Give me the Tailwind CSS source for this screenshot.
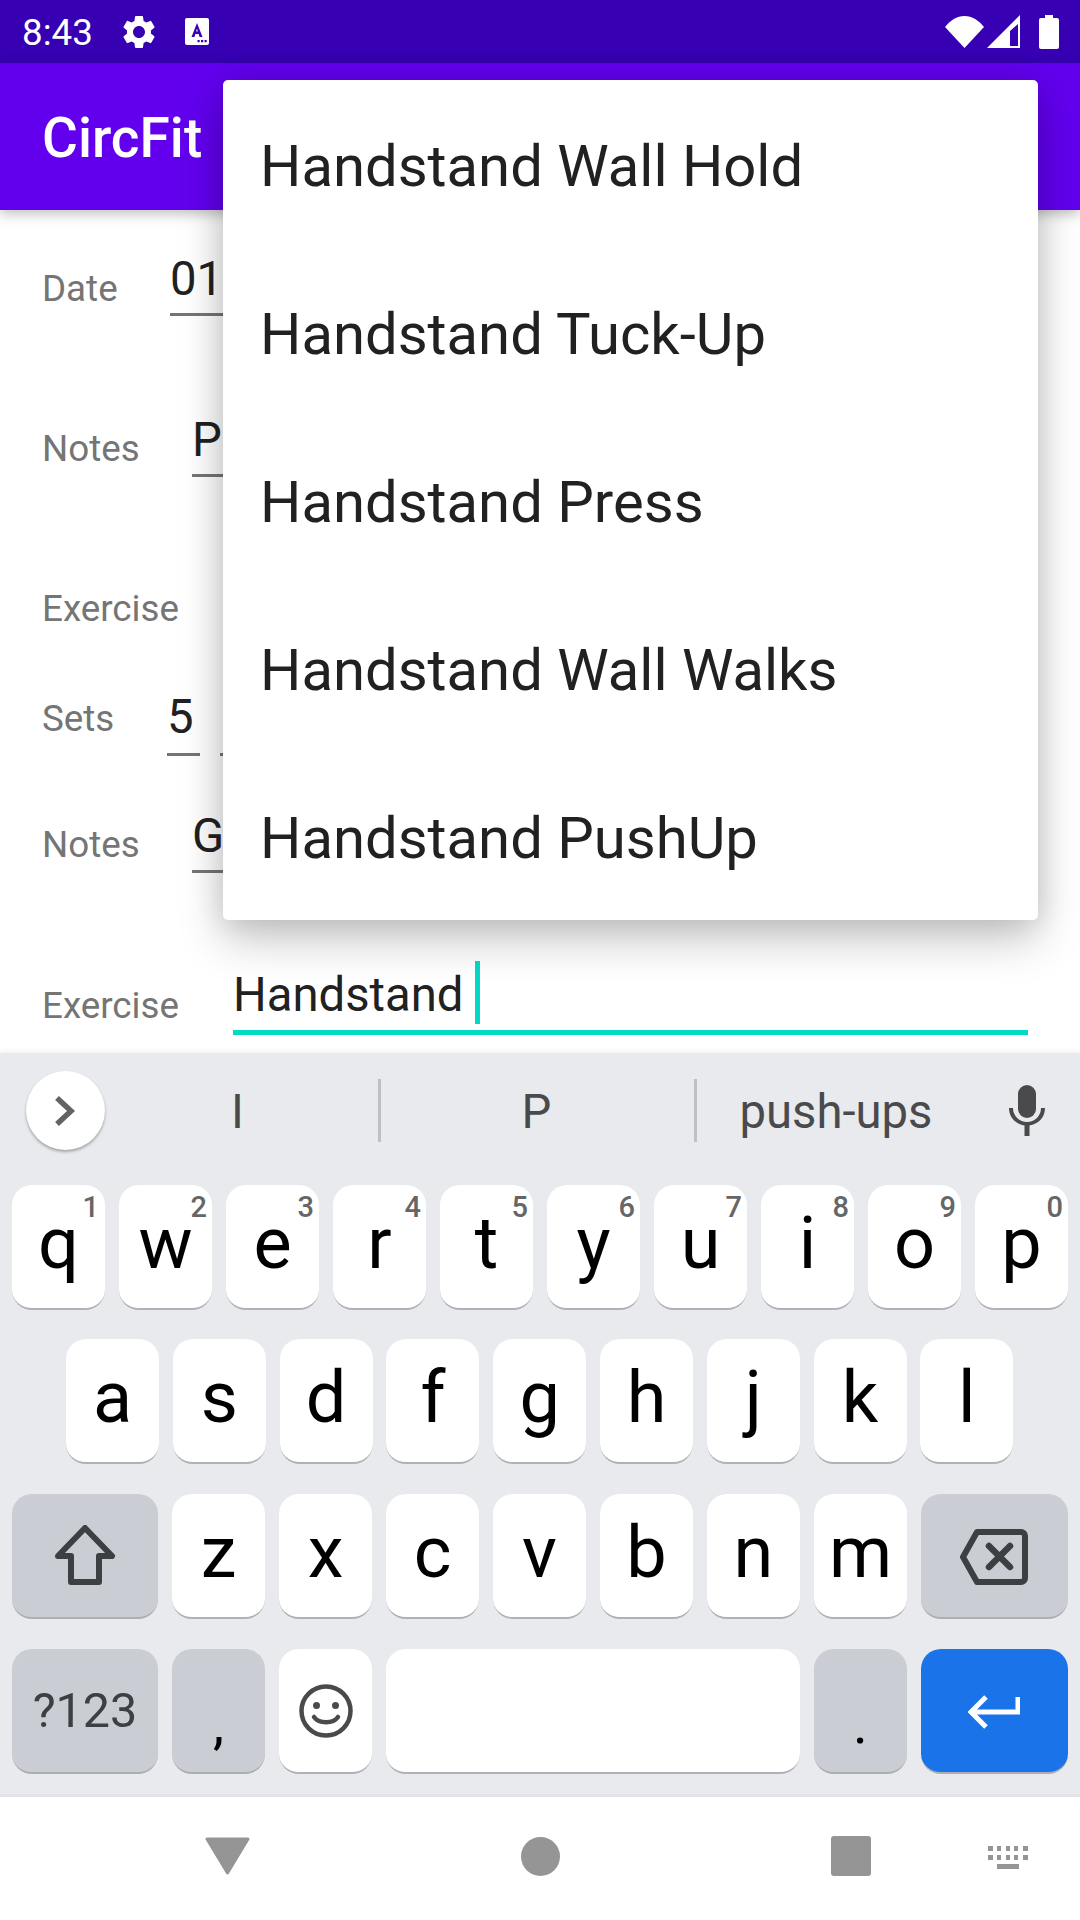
<!DOCTYPE html>
<html><head><meta charset="utf-8">
<script src="https://cdn.jsdelivr.net/npm/@tailwindcss/browser@4"></script>
</head>
<body class="m-0">
<div class="w-[1080px] h-[1920px] bg-white flex flex-col overflow-hidden relative font-['Roboto',sans-serif]">

  <!-- status bar -->
  <div class="h-[63px] bg-[#3700b3] flex items-center text-white shrink-0">
    <span class="ml-[22px] pt-[3px] text-[36.75px] leading-none">8:43</span>
    <svg class="ml-[26px] w-[40px] h-[40px]" viewBox="0 0 24 24" fill="#fff"><path d="M19.14 12.94c.04-.3.06-.61.06-.94 0-.32-.02-.64-.07-.94l2.03-1.58a.49.49 0 0 0 .12-.61l-1.92-3.32a.49.49 0 0 0-.59-.22l-2.39.96c-.5-.38-1.03-.7-1.62-.94l-.36-2.54a.48.48 0 0 0-.48-.41h-3.84c-.24 0-.43.17-.47.41l-.36 2.54c-.59.24-1.13.57-1.62.94l-2.39-.96c-.22-.08-.47 0-.59.22L2.74 8.87c-.12.21-.08.47.12.61l2.03 1.58c-.05.3-.09.63-.09.94s.02.64.07.94l-2.03 1.58a.49.49 0 0 0-.12.61l1.92 3.32c.12.22.37.29.59.22l2.39-.96c.5.38 1.03.7 1.62.94l.36 2.54c.05.24.24.41.48.41h3.84c.24 0 .44-.17.47-.41l.36-2.54c.59-.24 1.13-.56 1.62-.94l2.39.96c.22.08.47 0 .59-.22l1.92-3.32c.12-.22.07-.47-.12-.61l-2.01-1.58zM12 15.6c-1.98 0-3.6-1.62-3.6-3.6s1.62-3.6 3.6-3.6 3.6 1.62 3.6 3.6-1.62 3.6-3.6 3.6z"/></svg>
    <svg class="ml-[26px] w-[24px] h-[27px]" viewBox="0 0 24 27"><rect width="24" height="27" rx="2" fill="#fff"/><path d="M12 5 L6.5 19 H9.4 L10.4 16 H13.6 L14.6 19 H17.5 Z M11.2 13.5 L12 10.5 L12.8 13.5 Z" fill="#3700b3"/><rect x="12.5" y="22" width="2.2" height="2.2" fill="#3700b3"/><rect x="16" y="22" width="2.2" height="2.2" fill="#3700b3"/><rect x="19.5" y="22" width="2.2" height="2.2" fill="#3700b3"/></svg>
    <svg class="ml-auto w-[39px] h-[32px]" viewBox="0 0 39 32" fill="#fff"><path d="M0 11 C5 4.500 12 0 19.500 0 C27 0 34 4.500 39 11 L19.500 32 Z"/></svg>
    <svg class="ml-[3px] w-[33px] h-[33px]" viewBox="0 0 33 33"><path fill-rule="evenodd" fill="#fff" d="M33 0 V33 H0 Z M31 9 L23 16 V31 H31 Z"/><path d="M25 17 L29.500 12 V29.500 H25 Z" fill="#3700b3"/></svg>
    <svg class="ml-[19px] mr-[21px] w-[20px] h-[34px]" viewBox="0 0 20 34" fill="#fff"><path d="M6 0 H14 V3 H18 A2 2 0 0 1 20 5 V32 A2 2 0 0 1 18 34 H2 A2 2 0 0 1 0 32 V5 A2 2 0 0 1 2 3 H6 Z"/></svg>
  </div>

  <!-- app bar -->
  <div class="relative z-10 h-[147px] bg-[#6200ee] flex items-center pl-[42px] pt-[4px] shadow-[0_4px_12px_rgba(0,0,0,0.25)] shrink-0">
    <span class="text-white text-[55px] font-medium leading-none">CircFit</span>
  </div>

  <!-- form -->
  <div class="h-[843px] shrink-0 overflow-hidden pl-[42px] text-[36.75px] text-[#757575]">
    <div class="mt-[44px] h-[62px] flex items-end">
      <span class="w-[128px] mb-[2px] leading-[50px]">Date</span>
      <div class="w-[300px] h-[62px] border-b-[3px] border-[#757575] text-[47.25px] leading-[50px] text-[#212121]">01</div>
    </div>
    <div class="mt-[99px] h-[62px] flex items-end">
      <span class="w-[150px] mb-[3px] leading-[50px]">Notes</span>
      <div class="w-[300px] h-[62px] border-b-[3px] border-[#757575] text-[47.25px] leading-[50px] text-[#212121]">P</div>
    </div>
    <div class="mt-[107px] h-[50px] leading-[50px]">Exercise</div>
    <div class="mt-[60px] h-[62px] flex items-end">
      <span class="w-[125px] mb-[12px] leading-[50px]">Sets</span>
      <div class="w-[33px] h-[64px] border-b-[3px] border-[#757575] text-[47.25px] leading-[50px] text-[#212121]">5</div>
      <div class="ml-[20px] w-[60px] h-[64px] border-b-[3px] border-[#757575] text-[47.25px] leading-[50px] text-[#212121]">1</div>
    </div>
    <div class="mt-[55px] h-[62px] flex items-end">
      <span class="w-[150px] mb-[3px] leading-[50px]">Notes</span>
      <div class="w-[300px] h-[62px] border-b-[3px] border-[#757575] text-[47.25px] leading-[50px] text-[#212121]">G</div>
    </div>
    <div class="mt-[87px] h-[75px] flex items-end">
      <span class="w-[191px] mb-[4px] leading-[50px]">Exercise</span>
      <div class="w-[795px] h-[75px] border-b-[5px] border-[#03dac5] text-[47.25px] leading-[56px] text-[#212121] flex items-start pt-[7px]">
        <span>Handstand</span><span class="ml-[12px] -mt-[6px] w-[5px] h-[63px] bg-[#03dac5]"></span>
      </div>
    </div>
  </div>

  <!-- popup -->
  <div class="absolute z-20 left-[223px] top-[80px] w-[815px] h-[840px] bg-white rounded-[5px] shadow-[0_20px_45px_rgba(0,0,0,0.22),0_0_30px_rgba(0,0,0,0.12)] pl-[37px] text-[58px] text-[#212121] flex flex-col">
    <div class="h-[168px] pt-[5px] flex items-center">Handstand Wall Hold</div>
    <div class="h-[168px] pt-[5px] flex items-center">Handstand Tuck-Up</div>
    <div class="h-[168px] pt-[5px] flex items-center">Handstand Press</div>
    <div class="h-[168px] pt-[5px] flex items-center">Handstand Wall Walks</div>
    <div class="h-[168px] pt-[5px] flex items-center">Handstand PushUp</div>
  </div>

  <!-- keyboard -->
  <div class="relative z-10 h-[744px] bg-[#e8eaed] border-b-[3px] border-[#e1e3e6] shadow-[0_-2px_5px_rgba(0,0,0,0.06)] shrink-0 flex flex-col">
    <div class="h-[132px] flex items-start pt-[18px] text-[47.25px] text-[#4a4a4d] shrink-0">
      <div class="ml-[26px] w-[79px] h-[79px] rounded-full bg-white shadow-[0_2px_3px_rgba(0,0,0,0.3)] flex items-center justify-center shrink-0">
        <svg class="w-[26px] h-[32px]" viewBox="0 0 26 32" fill="none" stroke="#636363" stroke-width="5.500"><path d="M4 3 L18 16 L4 29"/></svg>
      </div>
      <div class="mt-[8px] w-[276px] h-[63px] pr-[8px] pt-[3px] flex items-center justify-center border-r-[3px] border-[#bfc0c4]">I</div>
      <div class="mt-[8px] w-[316px] h-[63px] pr-[2px] pt-[3px] flex items-center justify-center border-r-[3px] border-[#bfc0c4]">P</div>
      <div class="mt-[8px] w-[278px] h-[63px] pt-[3px] flex items-center justify-center">push-ups</div>
      <svg class="ml-[33px] mt-[14px] w-[38px] h-[51px]" viewBox="0 0 38 51" fill="#4a4a4d"><rect x="10" y="0" width="18" height="33" rx="9"/><path d="M1 23 H5 A14 14 0 0 0 33 23 H37 C37 33 30 39 21.500 40.500 V51 H16.500 V40.500 C8 39 1 33 1 23 Z"/></svg>
    </div>

    <!-- row 1 -->
    <div class="h-[125px] px-[12px] flex gap-[14px] text-[72px] leading-none text-black shrink-0">
      <div class="relative w-[93px] h-[125px] pb-[5px] bg-white rounded-[20px] border-b-2 border-[#b0b1b5] flex items-center justify-center">q<span class="absolute top-[8px] right-[6px] text-[29px] font-medium text-[#666]">1</span></div>
      <div class="relative w-[93px] h-[125px] pb-[5px] bg-white rounded-[20px] border-b-2 border-[#b0b1b5] flex items-center justify-center">w<span class="absolute top-[8px] right-[5px] text-[29px] font-medium text-[#666]">2</span></div>
      <div class="relative w-[93px] h-[125px] pb-[5px] bg-white rounded-[20px] border-b-2 border-[#b0b1b5] flex items-center justify-center">e<span class="absolute top-[8px] right-[5px] text-[29px] font-medium text-[#666]">3</span></div>
      <div class="relative w-[93px] h-[125px] pb-[5px] bg-white rounded-[20px] border-b-2 border-[#b0b1b5] flex items-center justify-center">r<span class="absolute top-[8px] right-[5px] text-[29px] font-medium text-[#666]">4</span></div>
      <div class="relative w-[93px] h-[125px] pb-[5px] bg-white rounded-[20px] border-b-2 border-[#b0b1b5] flex items-center justify-center">t<span class="absolute top-[8px] right-[5px] text-[29px] font-medium text-[#666]">5</span></div>
      <div class="relative w-[93px] h-[125px] pb-[5px] bg-white rounded-[20px] border-b-2 border-[#b0b1b5] flex items-center justify-center">y<span class="absolute top-[8px] right-[5px] text-[29px] font-medium text-[#666]">6</span></div>
      <div class="relative w-[93px] h-[125px] pb-[5px] bg-white rounded-[20px] border-b-2 border-[#b0b1b5] flex items-center justify-center">u<span class="absolute top-[8px] right-[5px] text-[29px] font-medium text-[#666]">7</span></div>
      <div class="relative w-[93px] h-[125px] pb-[5px] bg-white rounded-[20px] border-b-2 border-[#b0b1b5] flex items-center justify-center">i<span class="absolute top-[8px] right-[5px] text-[29px] font-medium text-[#666]">8</span></div>
      <div class="relative w-[93px] h-[125px] pb-[5px] bg-white rounded-[20px] border-b-2 border-[#b0b1b5] flex items-center justify-center">o<span class="absolute top-[8px] right-[5px] text-[29px] font-medium text-[#666]">9</span></div>
      <div class="relative w-[93px] h-[125px] pb-[5px] bg-white rounded-[20px] border-b-2 border-[#b0b1b5] flex items-center justify-center">p<span class="absolute top-[8px] right-[5px] text-[29px] font-medium text-[#666]">0</span></div>
    </div>

    <!-- row 2 -->
    <div class="mt-[29px] h-[125px] pl-[66px] flex gap-[13.8px] text-[72px] leading-none text-black shrink-0">
      <div class="w-[93px] h-[125px] pb-[5px] bg-white rounded-[20px] border-b-2 border-[#b0b1b5] flex items-center justify-center">a</div>
      <div class="w-[93px] h-[125px] pb-[5px] bg-white rounded-[20px] border-b-2 border-[#b0b1b5] flex items-center justify-center">s</div>
      <div class="w-[93px] h-[125px] pb-[5px] bg-white rounded-[20px] border-b-2 border-[#b0b1b5] flex items-center justify-center">d</div>
      <div class="w-[93px] h-[125px] pb-[5px] bg-white rounded-[20px] border-b-2 border-[#b0b1b5] flex items-center justify-center">f</div>
      <div class="w-[93px] h-[125px] pb-[5px] bg-white rounded-[20px] border-b-2 border-[#b0b1b5] flex items-center justify-center">g</div>
      <div class="w-[93px] h-[125px] pb-[5px] bg-white rounded-[20px] border-b-2 border-[#b0b1b5] flex items-center justify-center">h</div>
      <div class="w-[93px] h-[125px] pb-[5px] bg-white rounded-[20px] border-b-2 border-[#b0b1b5] flex items-center justify-center">j</div>
      <div class="w-[93px] h-[125px] pb-[5px] bg-white rounded-[20px] border-b-2 border-[#b0b1b5] flex items-center justify-center">k</div>
      <div class="w-[93px] h-[125px] pb-[5px] bg-white rounded-[20px] border-b-2 border-[#b0b1b5] flex items-center justify-center">l</div>
    </div>

    <!-- row 3 -->
    <div class="mt-[30px] h-[125px] px-[12px] flex gap-[14px] text-[72px] leading-none text-black shrink-0">
      <div class="w-[146px] h-[125px] pb-[1px] bg-[#cbcdd4] rounded-[20px] border-b-2 border-[#adaeb2] flex items-center justify-center">
        <svg class="w-[62px] h-[60px]" viewBox="0 0 62 60" fill="none" stroke="#3c4043" stroke-width="6" stroke-linejoin="round"><path d="M31 3 L58 31 H45 V57 H17 V31 H4 Z"/></svg>
      </div>
      <div class="w-[93px] h-[125px] pb-[5px] bg-white rounded-[20px] border-b-2 border-[#b0b1b5] flex items-center justify-center">z</div>
      <div class="w-[93px] h-[125px] pb-[5px] bg-white rounded-[20px] border-b-2 border-[#b0b1b5] flex items-center justify-center">x</div>
      <div class="w-[93px] h-[125px] pb-[5px] bg-white rounded-[20px] border-b-2 border-[#b0b1b5] flex items-center justify-center">c</div>
      <div class="w-[93px] h-[125px] pb-[5px] bg-white rounded-[20px] border-b-2 border-[#b0b1b5] flex items-center justify-center">v</div>
      <div class="w-[93px] h-[125px] pb-[5px] bg-white rounded-[20px] border-b-2 border-[#b0b1b5] flex items-center justify-center">b</div>
      <div class="w-[93px] h-[125px] pb-[5px] bg-white rounded-[20px] border-b-2 border-[#b0b1b5] flex items-center justify-center">n</div>
      <div class="w-[93px] h-[125px] pb-[5px] bg-white rounded-[20px] border-b-2 border-[#b0b1b5] flex items-center justify-center">m</div>
      <div class="w-[147px] h-[125px] pr-[2px] pt-[3px] bg-[#cbcdd4] rounded-[20px] border-b-2 border-[#adaeb2] flex items-center justify-center">
        <svg class="w-[68px] h-[56px]" viewBox="0 0 68 56" fill="none" stroke="#3c4043" stroke-width="6" stroke-linejoin="round" stroke-linecap="round"><path d="M17 3 H61 A4 4 0 0 1 65 7 V49 A4 4 0 0 1 61 53 H17 L3 28 Z"/><path d="M29 17 L50 38 M50 17 L29 38" stroke-width="6.500"/></svg>
      </div>
    </div>

    <!-- row 4 -->
    <div class="mt-[30px] h-[125px] px-[12px] flex gap-[14px] text-[72px] leading-none text-black shrink-0">
      <div class="w-[146px] h-[125px] pt-[2px] bg-[#cbcdd4] rounded-[20px] border-b-2 border-[#adaeb2] flex items-center justify-center text-[48.5px] text-[#3c4043]">?123</div>
      <div class="w-[93px] h-[125px] bg-[#cbcdd4] rounded-[20px] border-b-2 border-[#adaeb2] flex items-start justify-center text-[56px] pt-[47px]">,</div>
      <div class="w-[93px] h-[125px] bg-white rounded-[20px] border-b-2 border-[#b0b1b5] flex items-center justify-center">
        <svg class="w-[54px] h-[54px]" viewBox="0 0 54 54" fill="none" stroke="#4a4a4d"><circle cx="27" cy="27" r="24.500" stroke-width="4.500"/><circle cx="17.500" cy="21.500" r="3.500" fill="#4a4a4d" stroke="none"/><circle cx="36.500" cy="21.500" r="3.500" fill="#4a4a4d" stroke="none"/><path d="M15 33 C20 40 34 40 39 33" stroke-width="4.500" stroke-linecap="round"/></svg>
      </div>
      <div class="w-[414px] h-[125px] bg-white rounded-[20px] border-b-2 border-[#b0b1b5]"></div>
      <div class="w-[93px] h-[125px] bg-[#cbcdd4] rounded-[20px] border-b-2 border-[#adaeb2] flex items-start justify-center text-[56px] pt-[47px]">.</div>
      <div class="w-[147px] h-[125px] pr-[2px] pt-[3px] bg-[#1a73e8] rounded-[20px] border-b-2 border-[#adaeb2] flex items-center justify-center">
        <svg class="w-[52px] h-[34px]" viewBox="0 0 52 34" fill="none" stroke="#fff" stroke-width="5"><path d="M50 2 V17 H4 M18 2 L3 17 L18 32"/></svg>
      </div>
    </div>
  </div>

  <!-- nav -->
  <div class="flex-1 bg-white flex items-center relative">
    <svg class="ml-[205px] -mt-[6px] w-[45px] h-[38px]" viewBox="0 0 45 38" fill="#959595" stroke="#959595" stroke-width="3" stroke-linejoin="round"><path d="M2 2 H43 L22.500 36 Z"/></svg>
    <div class="ml-[271px] -mt-[5px] w-[39px] h-[39px] rounded-full bg-[#959595]"></div>
    <div class="ml-[271px] -mt-[5px] w-[40px] h-[40px] rounded-[3px] bg-[#959595]"></div>
    <svg class="ml-[117px] -mt-[2px] w-[40px] h-[23px]" viewBox="0 0 40 23" fill="#959595"><rect x="0" y="0" width="5" height="5"/><rect x="9" y="0" width="4" height="5"/><rect x="18" y="0" width="4" height="5"/><rect x="26" y="0" width="4" height="5"/><rect x="35" y="0" width="5" height="5"/><rect x="0" y="9" width="5" height="5"/><rect x="9" y="9" width="4" height="5"/><rect x="18" y="9" width="4" height="5"/><rect x="26" y="9" width="4" height="5"/><rect x="35" y="9" width="5" height="5"/><rect x="9" y="18" width="22" height="5"/></svg>
  </div>
</div>
</body></html>
